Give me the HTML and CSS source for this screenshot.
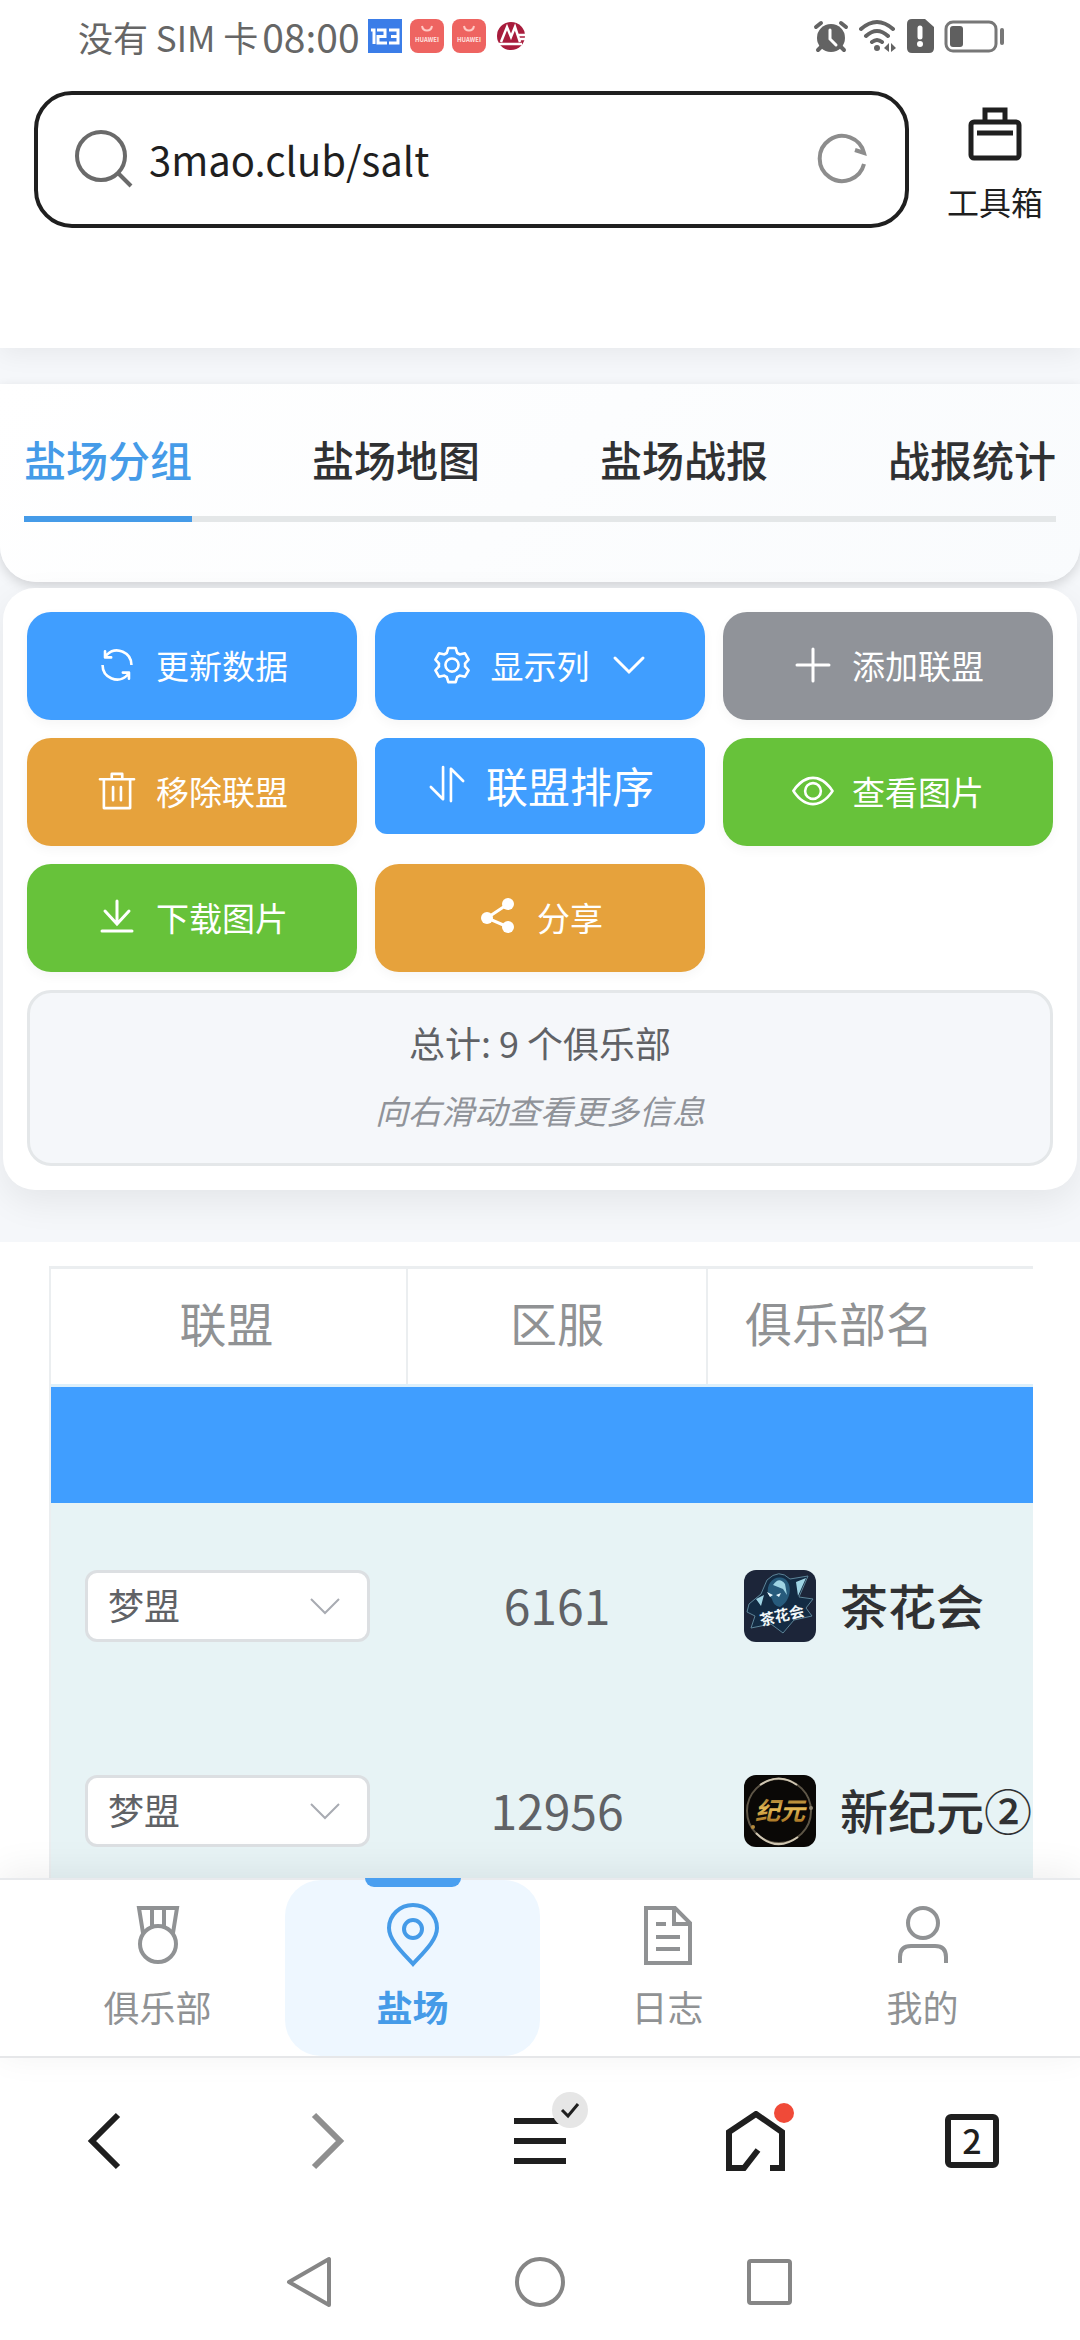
FILE: index.html
```html
<!DOCTYPE html>
<html lang="zh-CN">
<head>
  <meta charset="UTF-8" />
  <meta name="viewport" content="width=device-width, initial-scale=1.0" />
  <title>盐场分组</title>
  <link rel="stylesheet" href="styles.css">
</head>
<body>

  <!-- phone status bar -->
  <div class="status-bar">
    <span class="carrier">没有 SIM 卡</span>
    <span class="clock">08:00</span>
    <div class="notices">
      <svg width="34" height="34" viewBox="0 0 34 34"><rect width="34" height="34" fill="#3b7de8"/><path d="M3 11h3v14M9 11h8v6.500h-7V24h9M21 11h9v13h-9M23 17.500h7" fill="none" stroke="#fff" stroke-width="3"/></svg>
      <svg width="34" height="34" viewBox="0 0 34 34"><rect width="34" height="34" rx="8" fill="#ee6461"/><path d="M12 7c1 6 9 6 10 0" fill="none" stroke="#ffc9c4" stroke-width="2"/><text x="17" y="23" font-size="6" font-weight="700" text-anchor="middle" fill="#ffe3e0">HUAWEI</text></svg>
      <svg width="34" height="34" viewBox="0 0 34 34"><rect width="34" height="34" rx="8" fill="#ee6461"/><path d="M12 7c1 6 9 6 10 0" fill="none" stroke="#ffc9c4" stroke-width="2"/><text x="17" y="23" font-size="6" font-weight="700" text-anchor="middle" fill="#ffe3e0">HUAWEI</text></svg>
      <svg width="34" height="34" viewBox="0 0 34 34"><circle cx="17" cy="17" r="14" fill="#a81c3c"/><path d="M7 23l6-15 4 10 4-10 5 15M5 25h23M24 16h8M25 20h7" fill="none" stroke="#fff" stroke-width="2.500"/></svg>
    </div>
    <div class="signals">
      <svg width="36" height="34" viewBox="0 0 36 34"><circle cx="18" cy="19" r="14" fill="#636363"/><path d="M3 8l5-4M33 8l-5-4M5 31l4-4M31 31l-4-4" stroke="#636363" stroke-width="4" stroke-linecap="round"/><path d="M17 11v9l6 6" fill="none" stroke="#fff" stroke-width="3" stroke-linecap="round"/></svg>
      <svg width="38" height="34" viewBox="0 0 38 34"><path d="M2 10q16-14 32 0M7 17q11-10 22 0M13 23q5-4 10 0" fill="none" stroke="#636363" stroke-width="4" stroke-linecap="round"/><circle cx="18" cy="29" r="3" fill="#636363"/><path d="M30 24v9l-5-4zM32 24v9l5-4z" fill="#636363"/></svg>
      <svg width="27" height="34" viewBox="0 0 27 34"><path d="M5 0h13l9 8v21q0 5-5 5H5q-5 0-5-5V5q0-5 5-5z" fill="#5f5f5f"/><path d="M13 9v9" stroke="#fff" stroke-width="5" stroke-linecap="round"/><circle cx="13" cy="25" r="3" fill="#fff"/></svg>
      <svg width="60" height="34" viewBox="0 0 60 34"><rect x="2" y="3" width="50" height="29" rx="7" fill="none" stroke="#777" stroke-width="3"/><rect x="6" y="7" width="13" height="21" rx="3" fill="#5f5f5f"/><path d="M58 11v13" stroke="#777" stroke-width="4" stroke-linecap="round"/></svg>
    </div>
  </div>

  <!-- browser address bar -->
  <header class="address-row">
    <form class="address-box">
      <svg width="60" height="60" viewBox="0 0 60 60" fill="none" stroke="#6a6a6a" stroke-width="4"><circle cx="27" cy="27" r="24"/><path d="M44 44l13 13"/></svg>
      <input type="text" class="address" value="3mao.club/salt" aria-label="网址">
      <button type="button" class="plain-btn" aria-label="刷新">
        <svg width="52" height="52" viewBox="0 0 52 52" fill="none" stroke="#8d8d8d" stroke-width="4"><path d="M48 31A22.500 22.500 0 1 1 48 20L39 17"/></svg>
      </button>
    </form>
    <button type="button" class="plain-btn toolbox">
      <svg width="54" height="54" viewBox="0 0 54 54" fill="none" stroke="#1f1f1f" stroke-width="5"><rect x="3" y="15" width="48" height="36" rx="3"/><path d="M17 14V3h20v11M9 26h36"/></svg>
      <span>工具箱</span>
    </button>
  </header>

  <main class="page">
    <div class="top-strip"></div>

    <nav class="tabs-card">
      <div class="tabs">
        <a href="#" class="tab active">盐场分组</a>
        <a href="#" class="tab">盐场地图</a>
        <a href="#" class="tab">盐场战报</a>
        <a href="#" class="tab">战报统计</a>
      </div>
    </nav>

    <section class="tools-card">
      <div class="btn-grid">
        <button type="button" class="btn primary">
          <svg class="ic" viewBox="0 0 1024 1024"><path d="M771.776 794.88A384 384 0 0 1 128 512h64a320 320 0 0 0 555.712 216.448H654.72a32 32 0 1 1 0-64h149.056a32 32 0 0 1 32 32v148.928a32 32 0 1 1-64 0v-50.56zM276.288 295.616h92.992a32 32 0 0 1 0 64H220.16a32 32 0 0 1-32-32V178.56a32 32 0 0 1 64 0v50.56A384 384 0 0 1 896.128 512h-64a320 320 0 0 0-555.776-216.384z"/></svg>
          更新数据
        </button>
        <button type="button" class="btn primary">
          <svg class="ic" viewBox="0 0 1024 1024"><path d="M600.704 64a32 32 0 0 1 30.464 22.208l35.2 109.376c14.784 7.232 28.928 15.36 42.432 24.512l112.384-24.192a32 32 0 0 1 34.432 15.36L944.32 364.8a32 32 0 0 1-4.032 37.504l-77.12 85.12a357.12 357.12 0 0 1 0 49.024l77.12 85.248a32 32 0 0 1 4.032 37.504l-88.704 153.6a32 32 0 0 1-34.432 15.296L708.8 803.904c-13.44 9.088-27.648 17.28-42.368 24.512l-35.264 109.376A32 32 0 0 1 600.704 960H423.296a32 32 0 0 1-30.464-22.208L357.696 828.48a351.616 351.616 0 0 1-42.56-24.64l-112.32 24.256a32 32 0 0 1-34.432-15.36L79.68 659.2a32 32 0 0 1 4.032-37.504l77.12-85.248a357.12 357.12 0 0 1 0-48.896l-77.12-85.248A32 32 0 0 1 79.68 364.8l88.704-153.6a32 32 0 0 1 34.432-15.296l112.32 24.256c13.568-9.152 27.776-17.408 42.56-24.64l35.2-109.312A32 32 0 0 1 423.232 64H600.64zm-23.424 64H446.72l-36.352 113.088-24.512 11.968a294.113 294.113 0 0 0-34.816 20.096l-22.656 15.36-116.224-25.088-65.28 113.152 79.68 88.192-1.92 27.136a293.12 293.12 0 0 0 0 40.192l1.92 27.136-79.808 88.192 65.344 113.152 116.224-25.024 22.656 15.296a294.113 294.113 0 0 0 34.816 20.096l24.512 11.968L446.72 896h130.688l36.48-113.152 24.448-11.904a288.282 288.282 0 0 0 34.752-20.096l22.592-15.296 116.288 25.024 65.28-113.152-79.744-88.192 1.92-27.136a293.12 293.12 0 0 0 0-40.256l-1.92-27.136 79.808-88.128-65.344-113.152-116.288 24.96-22.592-15.232a287.616 287.616 0 0 0-34.752-20.096l-24.448-11.904L577.344 128zM512 320a192 192 0 1 1 0 384 192 192 0 0 1 0-384m0 64a128 128 0 1 0 0 256 128 128 0 0 0 0-256"/></svg>
          显示列
          <svg class="ic line" viewBox="0 0 42 42"><path d="M7 14l14 14 14-14"/></svg>
        </button>
        <button type="button" class="btn info">
          <svg class="ic line" viewBox="0 0 42 42"><path d="M21 5v32M5 21h32"/></svg>
          添加联盟
        </button>
        <button type="button" class="btn warning">
          <svg class="ic" viewBox="0 0 1024 1024"><path d="M160 256H96a32 32 0 0 1 0-64h256V95.936a32 32 0 0 1 32-32h256a32 32 0 0 1 32 32V192h256a32 32 0 1 1 0 64h-64v672a32 32 0 0 1-32 32H192a32 32 0 0 1-32-32zm448-64v-64H416v64zM224 896h576V256H224zm192-128a32 32 0 0 1-32-32V416a32 32 0 0 1 64 0v320a32 32 0 0 1-32 32m192 0a32 32 0 0 1-32-32V416a32 32 0 0 1 64 0v320a32 32 0 0 1-32 32"/></svg>
          移除联盟
        </button>
        <button type="button" class="btn primary large">
          <svg class="ic" viewBox="0 0 1024 1024"><path d="M384 96a32 32 0 0 1 64 0v786.752a32 32 0 0 1-54.592 22.656L95.936 608a32 32 0 0 1 0-45.312h.128a32 32 0 0 1 45.184 0L384 805.632zm192 45.248a32 32 0 0 1 54.592-22.592L928.064 416a32 32 0 0 1 0 45.312h-.128a32 32 0 0 1-45.184 0L640 218.496V928a32 32 0 1 1-64 0z"/></svg>
          联盟排序
        </button>
        <button type="button" class="btn success">
          <svg class="ic" viewBox="0 0 1024 1024"><path d="M512 160c320 0 512 352 512 352S832 864 512 864 0 512 0 512s192-352 512-352m0 64c-225.28 0-384.128 208.064-436.8 288 52.608 79.872 211.456 288 436.8 288 225.28 0 384.128-208.064 436.8-288-52.608-79.872-211.456-288-436.8-288zm0 64a224 224 0 1 1 0 448 224 224 0 0 1 0-448m0 64a160.192 160.192 0 0 0-160 160c0 88.192 71.744 160 160 160s160-71.808 160-160-71.744-160-160-160"/></svg>
          查看图片
        </button>
        <button type="button" class="btn success">
          <svg class="ic line" viewBox="0 0 42 42"><path d="M21 5v22M9 15l12 13 12-13M6 35h30"/></svg>
          下载图片
        </button>
        <button type="button" class="btn warning">
          <svg class="ic" viewBox="0 0 42 42"><circle cx="10" cy="22" r="6"/><circle cx="31" cy="8" r="6"/><circle cx="31" cy="31" r="6"/><path d="M31 8L10 22l21 9" fill="none" stroke="#fff" stroke-width="3"/></svg>
          分享
        </button>
      </div>
      <div class="summary">
        <p class="total">总计: 9 个俱乐部</p>
        <p class="hint">向右滑动查看更多信息</p>
      </div>
    </section>

    <section class="table-area">
      <div class="table-scroll">
        <table class="clubs">
          <thead>
            <tr><th class="col-union">联盟</th><th class="col-server">区服</th><th class="col-name">俱乐部名</th></tr>
          </thead>
          <tbody>
            <tr class="group-row"><td colspan="3"></td></tr>
            <tr class="club-row">
              <td>
                <div class="select-wrap">
                  <select aria-label="联盟"><option>梦盟</option></select>
                  <svg width="32" height="32" viewBox="0 0 32 32"><path d="M2 9l14 14L30 9"/></svg>
                </div>
              </td>
              <td class="server">6161</td>
              <td class="name">
                <div class="club">
                  <svg class="avatar" viewBox="0 0 72 72">
                    <rect width="72" height="72" fill="#1c2539"/>
                    <path d="M5 34l12-10 6-14q12-12 23-1l18-3-9 21 14 2-7 9 6 8-18 4-11 13-12-9-20 4 4-12-8-4z" fill="#132b43" stroke="#5d8498" stroke-width="1"/>
                    <path d="M24 24c-2-12 8-20 17-15 8 6 6 22-5 28-5-1-7-4-8-8z" fill="#275b7c"/>
                    <path d="M29 15q6-9 12-1l2 11-4-6zM52 12l10-4-8 18zM12 29l8-4-3 11z" fill="#9fd4e4"/>
                    <path d="M23 22l6 3-3 2zM32 25l5-2-2 4z" fill="#e8f8ff"/>
                    <text x="38" y="51" font-size="15" font-weight="700" text-anchor="middle" fill="#f1f7f9" transform="rotate(-13 38 46)">茶花会</text>
                  </svg>
                  <span>茶花会</span>
                </div>
              </td>
            </tr>
            <tr class="club-row">
              <td>
                <div class="select-wrap">
                  <select aria-label="联盟"><option>梦盟</option></select>
                  <svg width="32" height="32" viewBox="0 0 32 32"><path d="M2 9l14 14L30 9"/></svg>
                </div>
              </td>
              <td class="server">12956</td>
              <td class="name">
                <div class="club">
                  <svg class="avatar" viewBox="0 0 72 72">
                    <defs>
                      <linearGradient id="gold" x1="0" y1="0" x2="0" y2="1"><stop offset="0" stop-color="#7a4f14"/><stop offset="0.500" stop-color="#e3b955"/><stop offset="1" stop-color="#8f5a12"/></linearGradient>
                    </defs>
                    <rect width="72" height="72" fill="#0a0806"/>
                    <circle cx="35" cy="36" r="32" fill="none" stroke="#5d5546" stroke-width="2"/>
                    <path d="M16 10Q35-3 53 10M12 58q20 20 42 4" fill="none" stroke="#cfc6b2" stroke-width="2"/>
                    <circle cx="67" cy="33" r="2" fill="#8c8371"/><circle cx="9" cy="52" r="2" fill="#b48a3c"/>
                    <text x="36" y="45" font-size="25" font-weight="700" font-style="italic" text-anchor="middle" fill="url(#gold)">纪元</text>
                  </svg>
                  <span>新纪元②</span>
                </div>
              </td>
            </tr>
          </tbody>
        </table>
      </div>
    </section>
  </main>

  <!-- site navigation -->
  <nav class="app-nav">
    <a href="#">
      <svg width="66" height="66" viewBox="0 0 66 66"><circle cx="33" cy="42" r="18"/><path d="M18 31L14 6h38l-4 25M27 6v18M39 6v18"/></svg>
      <span>俱乐部</span>
    </a>
    <a href="#" class="active">
      <svg width="66" height="66" viewBox="0 0 66 66"><path d="M33 62C22 50 9 38 9 26a24 23 0 0 1 48 0c0 12-13 24-24 36z"/><circle cx="33" cy="27" r="9"/></svg>
      <span>盐场</span>
    </a>
    <a href="#">
      <svg width="66" height="66" viewBox="0 0 66 66"><path d="M11 6h29l15 15v40H11zM39 6v16h16M21 22h10M21 35h24M21 47h24"/></svg>
      <span>日志</span>
    </a>
    <a href="#">
      <svg width="66" height="66" viewBox="0 0 66 66"><circle cx="33" cy="21" r="15"/><path d="M10 61v-6q0-11 11-11h24q11 0 11 11v6"/></svg>
      <span>我的</span>
    </a>
  </nav>

  <!-- browser toolbar -->
  <div class="browser-bar">
    <button type="button" class="plain-btn" aria-label="后退"><svg width="60" height="60" viewBox="0 0 60 60"><path d="M40 4L14 30l26 26"/></svg></button>
    <button type="button" class="plain-btn dim" aria-label="前进"><svg width="60" height="60" viewBox="0 0 60 60"><path d="M20 4l26 26-26 26"/></svg></button>
    <button type="button" class="plain-btn" aria-label="菜单">
      <svg width="60" height="60" viewBox="0 0 60 60"><path d="M4 10h52M4 30h52M4 50h52"/></svg>
      <span class="check-badge"><svg width="20" height="18" viewBox="0 0 20 18"><path d="M2 9l6 6L18 3"/></svg></span>
    </button>
    <button type="button" class="plain-btn" aria-label="主页">
      <svg width="60" height="60" viewBox="0 0 60 60"><path d="M44 57h12V21L30 3 3 21v36h15l14-18"/></svg>
      <span class="red-dot"></span>
    </button>
    <button type="button" class="plain-btn" aria-label="标签页"><span class="tab-count">2</span></button>
  </div>

  <!-- system keys -->
  <div class="system-bar">
    <button type="button" class="plain-btn" aria-label="返回"><svg width="54" height="54" viewBox="0 0 54 54"><path d="M46 4v46L6 27z" stroke-linejoin="round"/></svg></button>
    <button type="button" class="plain-btn" aria-label="桌面"><svg width="54" height="54" viewBox="0 0 54 54"><circle cx="27" cy="27" r="23"/></svg></button>
    <button type="button" class="plain-btn" aria-label="最近任务"><svg width="54" height="54" viewBox="0 0 54 54"><rect x="6" y="6" width="41" height="42" rx="2"/></svg></button>
  </div>

</body>
</html>
```

FILE: styles.css
```css
:root {
  --blue: #409eff;
  --green: #67c23a;
  --orange: #e6a23c;
  --gray: #909399;
  --line: #e4e7ed;
  --ink: #1f1f1f;
}
* { box-sizing: border-box; }
body {
  margin: 0;
  height: 100vh;
  display: flex;
  flex-direction: column;
  background: #fff;
  font-family: "Noto Sans CJK SC", "Noto Sans", sans-serif;
  color: #303133;
  overflow: hidden;
}
button, input, select { font-family: inherit; }
svg { display: block; flex: none; }
p { margin: 0; }
a { text-decoration: none; color: inherit; }
.plain-btn {
  background: none;
  border: none;
  padding: 0;
  color: var(--ink);
  cursor: pointer;
}

.status-bar {
  display: flex;
  align-items: center;
  height: 72px;
  padding: 0 76px 0 78px;
  color: #666;
}
.carrier { font-size: 35px; }
.clock { font-size: 39px; margin-left: 4px; }
.notices { display: flex; gap: 8px; margin-left: 8px; }
.signals { display: flex; gap: 10px; margin-left: auto; }

.address-row {
  display: flex;
  align-items: center;
  gap: 35px;
  padding: 19px 34px 22px;
}
.address-box {
  flex: 1;
  min-width: 0;
  display: flex;
  align-items: center;
  height: 137px;
  padding: 0 37px 2px 36px;
  border: 4px solid var(--ink);
  border-radius: 38px;
}
.address {
  flex: 1;
  min-width: 0;
  border: none;
  outline: none;
  background: none;
  padding: 0 15px;
  font-size: 40px;
  color: var(--ink);
}
.toolbox {
  display: flex;
  flex-direction: column;
  align-items: center;
  gap: 16px;
  width: 102px;
  padding-top: 12px;
  font-size: 32px;
  line-height: 48px;
}

.page {
  flex: 1;
  min-height: 0;
  overflow: hidden;
  background: #f5f7fa;
}
.top-strip {
  height: 98px;
  margin-bottom: 36px;
  background: #fff;
  box-shadow: 0 6px 24px rgba(0, 0, 0, 0.06);
}
.tabs-card {
  padding: 24px 24px 60px;
  background: linear-gradient(135deg, #fff, #f9fbfd);
  border-radius: 0 0 36px 36px;
  box-shadow: 0 4px 12px rgba(0, 0, 0, 0.14);
}
.tabs {
  display: flex;
  justify-content: space-between;
  border-bottom: 6px solid #e4e7e8;
}
.tab {
  font-size: 42px;
  line-height: 102px;
  font-weight: 500;
  padding-bottom: 6px;
  margin-bottom: -6px;
  border-bottom: 6px solid transparent;
}
.tab.active { color: #459be8; border-color: #459be8; }

.tools-card {
  position: relative;
  margin: 6px 3px 52px;
  padding: 24px;
  background: #fff;
  border-radius: 32px;
  box-shadow: 0 12px 36px rgba(0, 0, 0, 0.07);
}
.btn-grid {
  display: grid;
  grid-template-columns: repeat(3, 1fr);
  align-items: start;
  gap: 18px;
}
.btn {
  display: flex;
  align-items: center;
  justify-content: center;
  gap: 18px;
  height: 108px;
  padding: 0 0 2px;
  border: none;
  border-radius: 24px;
  color: #fff;
  font-size: 33px;
  box-shadow: 0 4px 12px rgba(0, 0, 0, 0.04);
  cursor: pointer;
}
.btn.large { height: 96px; padding-bottom: 4px; font-size: 42px; border-radius: 12px; box-shadow: none; }
.primary { background: var(--blue); }
.info { background: var(--gray); }
.warning { background: var(--orange); }
.success { background: var(--green); }
.ic { width: 42px; height: 42px; fill: currentColor; }
.ic.line { fill: none; stroke: currentColor; stroke-width: 3; stroke-linecap: round; }

.summary {
  margin-top: 18px;
  padding: 25px 24px 29px;
  background: #f5f7fa;
  border: 3px solid #e4e7e9;
  border-radius: 24px;
  text-align: center;
}
.total { font-size: 36px; line-height: 48px; color: #606266; }
.hint { font-size: 33px; line-height: 48px; margin-top: 20px; color: var(--gray); font-style: italic; }

.table-area { background: #fff; padding: 24px 47px 24px 49px; }
.table-scroll { overflow: hidden; border-top: 3px solid #ebeef0; border-left: 2px solid #ebeef0; }
.clubs { width: 100%; min-width: 960px; table-layout: fixed; border-collapse: collapse; }
.clubs th {
  height: 116px;
  padding: 0 0 8px;
  font-size: 47px;
  line-height: 70px;
  font-weight: 400;
  color: #909294;
  border-right: 2px solid #ebeef0;
  border-bottom: 3px solid #ddf0fb;
}
.clubs th.col-name { text-align: left; padding-left: 37px; border-right: none; }
.clubs th.col-union { width: 356px; padding-right: 4px; }
.col-server { width: 300px; }
.group-row td { height: 118px; padding: 0; background: var(--blue); }
.club-row td {
  height: 205px;
  padding: 0;
  background: #e7f3f5;
}
.club-row .server { text-align: center; padding-bottom: 3px; font-size: 48px; color: #606266; }
.club-row .name { padding-left: 37px; }
.select-wrap { position: relative; margin: 0 37px 0 34px; }
.select-wrap select {
  display: block;
  appearance: none;
  width: 100%;
  height: 72px;
  padding: 0 20px 3px;
  border: 3px solid #dcdfe2;
  border-radius: 12px;
  background: #fff;
  color: #606266;
  font-size: 36px;
}
.select-wrap svg {
  position: absolute;
  right: 29px;
  top: 20px;
  fill: none;
  stroke: #a8abb2;
  stroke-width: 2;
  pointer-events: none;
}
.club {
  display: flex;
  align-items: center;
  gap: 24px;
  font-size: 48px;
  line-height: 66px;
  font-weight: 500;
  white-space: nowrap;
}
.club span { padding-bottom: 4px; }
.avatar { width: 72px; height: 72px; border-radius: 12px; overflow: hidden; }

.app-nav {
  position: relative;
  display: flex;
  padding: 0 30px;
  background: #fff;
  border-top: 2px solid #e8eaed;
  border-bottom: 2px solid #e6e7e9;
  box-shadow: 0 -6px 36px rgba(0, 0, 0, 0.07);
}
.app-nav a {
  position: relative;
  flex: 1;
  display: flex;
  flex-direction: column;
  align-items: center;
  gap: 14px;
  padding: 22px 0 26px;
  border-radius: 36px;
  font-size: 36px;
  line-height: 48px;
  color: #909294;
}
.app-nav svg { fill: none; stroke: currentColor; stroke-width: 4; }
.app-nav a.active { background: #eef7ff; color: #459be8; font-weight: 700; }
.app-nav a.active::before {
  content: "";
  position: absolute;
  top: -2px;
  width: 96px;
  height: 9px;
  background: #4a9ff0;
  border-radius: 0 0 9px 9px;
}

.browser-bar { display: flex; height: 165px; }
.browser-bar .plain-btn {
  position: relative;
  flex: 1;
  display: flex;
  align-items: center;
  justify-content: center;
}
.browser-bar svg { fill: none; stroke: var(--ink); stroke-width: 6; }
.browser-bar .dim svg { stroke: #8f8f8f; }
.check-badge {
  position: absolute;
  top: 34px;
  left: 120px;
  display: flex;
  align-items: center;
  justify-content: center;
  width: 36px;
  height: 36px;
  border-radius: 50%;
  background: #e6e6e6;
}
.browser-bar .check-badge svg { stroke-width: 3; }
.red-dot {
  position: absolute;
  top: 45px;
  left: 126px;
  width: 20px;
  height: 20px;
  border-radius: 50%;
  background: #f04a38;
}
.tab-count {
  width: 54px;
  height: 54px;
  border: 6px solid var(--ink);
  border-radius: 6px;
  font-size: 34px;
  line-height: 40px;
  font-weight: 500;
}

.system-bar {
  display: flex;
  justify-content: center;
  gap: 176px;
  height: 117px;
}
.system-bar svg { fill: none; stroke: #868686; stroke-width: 4; }
```
